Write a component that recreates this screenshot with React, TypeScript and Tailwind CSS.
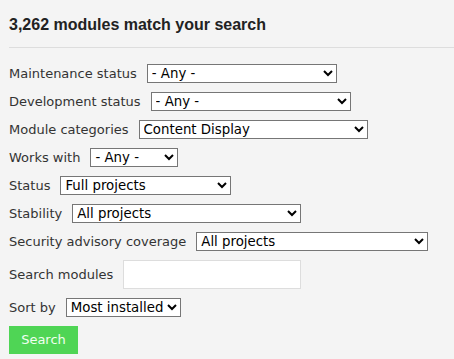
import React from "react";

const font = { fontFamily: '"DejaVu Sans", sans-serif' };

function Row({ label, width, value }: { label: string; width: string; value: string }) {
  return (
    <div className="flex items-center gap-[10px] h-[19px]">
      <label className="text-[13px] leading-[19px] text-[#333]">{label}</label>
      <select
        defaultValue={value}
        className={`${width} h-[19px] border border-[#767676] bg-white text-[13.33px] leading-[17px] text-black`}
      >
        <option>{value}</option>
      </select>
    </div>
  );
}

export default function App() {
  return (
    <div className="w-[454px] h-[359px] bg-[#f4f4f4] pl-[9px] overflow-hidden" style={font}>
      <div className="border-b border-[#dddddd] pt-[15px] pb-[13px]">
        <h2
          className="text-[16px] leading-[19px] font-bold text-[#222]"
          style={{ fontFamily: '"Liberation Sans", Arial, sans-serif' }}
        >
          3,262 modules match your search
        </h2>
      </div>
      <div className="mt-[16px] flex flex-col gap-[9px]">
        <Row label="Maintenance status" width="w-[190px]" value="- Any -" />
        <Row label="Development status" width="w-[200px]" value="- Any -" />
        <Row label="Module categories" width="w-[229px]" value="Content Display" />
        <Row label="Works with" width="w-[88px]" value="- Any -" />
        <Row label="Status" width="w-[171px]" value="Full projects" />
        <Row label="Stability" width="w-[229px]" value="All projects" />
        <Row label="Security advisory coverage" width="w-[232px]" value="All projects" />
        <div className="flex items-center gap-[10px] h-[29px]">
          <label className="text-[13px] leading-[19px] text-[#333]">Search modules</label>
          <input type="text" className="w-[178px] h-[29px] border border-[#dddddd] bg-white" />
        </div>
        <Row label="Sort by" width="w-[115px]" value="Most installed" />
        <div>
          <button className="w-[69px] h-[28px] bg-[#4fd555] text-[13px] text-[#f0fff0]">Search</button>
        </div>
      </div>
    </div>
  );
}
